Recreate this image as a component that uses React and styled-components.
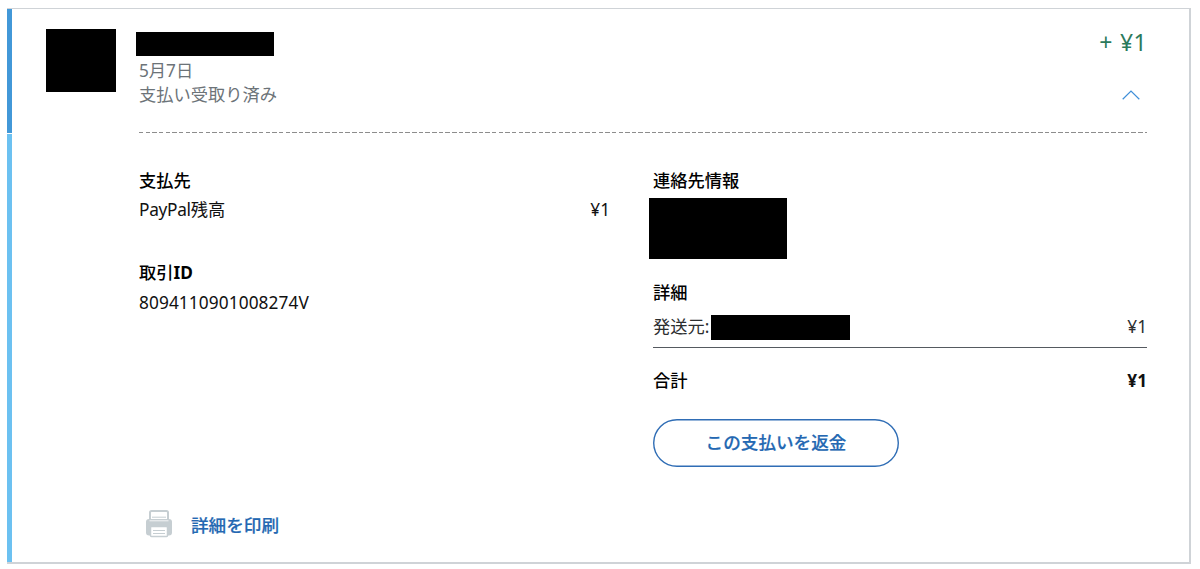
import styled, { createGlobalStyle } from "styled-components";

const GlobalStyle = createGlobalStyle`
    * {
        box-sizing: border-box;
    }

    body {
        margin: 0;
        background: #fff;
        color: #111;
        font-family: "Noto Sans", "Noto Sans CJK JP", sans-serif;
        font-size: 17.25px;
    }
`;

const App = () => {
    return (
        <>
            <GlobalStyle />
            <Card lang="ja">
                <Summary>
                    <Avatar />
                    <SummaryContent>
                        <SummaryText>
                            <Redacted $width={138} $height={24} />
                            <Muted>5月7日</Muted>
                            <Muted>支払い受取り済み</Muted>
                        </SummaryText>
                        <SummaryAside>
                            <Amount>+ ¥1</Amount>
                            <ChevronUp viewBox="0 0 18 10">
                                <path d="M0.7 9.2 L9 1 L17.3 9.2" />
                            </ChevronUp>
                        </SummaryAside>
                    </SummaryContent>
                </Summary>
                <Details>
                    <Columns>
                        <Column>
                            <Heading>支払先</Heading>
                            <FundingRow>
                                <span><Brand>PayPal</Brand>残高</span>
                                <Price>¥1</Price>
                            </FundingRow>
                            <Heading>取引<b>ID</b></Heading>
                            <TransactionId>8094110901008274V</TransactionId>
                        </Column>
                        <Column>
                            <Heading>連絡先情報</Heading>
                            <ContactBlock $width={138} $height={61} />
                            <Heading>詳細</Heading>
                            <SenderRow>
                                <Sender>
                                    発送元:
                                    <Redacted $width={139} $height={25} />
                                </Sender>
                                <Price>¥1</Price>
                            </SenderRow>
                            <TotalRow>
                                <Heading>合計</Heading>
                                <Price $bold>¥1</Price>
                            </TotalRow>
                            <RefundButton>この支払いを返金</RefundButton>
                        </Column>
                    </Columns>
                    <PrintLink href="#">
                        <PrinterIcon viewBox="0 0 26 28">
                            <path d="M4 9V2.5Q4 1 5.5 1H20.5Q22 1 22 2.5V9" />
                            <path className="line" d="M6 7.2H20" />
                            <rect x="0" y="9" width="26" height="16.5" rx="3" />
                            <path className="gap" d="M3.5 10.8H22.5" />
                            <rect className="paper" x="4.5" y="16.5" width="17" height="10" rx="1" />
                            <path className="line" d="M7 20.5H19M7 23.5H19" />
                        </PrinterIcon>
                        詳細を印刷
                    </PrintLink>
                </Details>
            </Card>
        </>
    );
};

const Card = styled.div`
    width: 1184px;
    height: 556px;
    margin: 8px 0 0 7px;
    border: solid #cfd3d7;
    border-width: 1px 2px 2px 0;
    display: flex;
    flex-direction: column;
    gap: 1px;
`;

const Summary = styled.div`
    display: flex;
    height: 124px;
    padding: 20px 42px 0 34px;
    border-left: 5px solid #4298d8;
`;

const Avatar = styled.div`
    width: 70px;
    height: 63px;
    background: #000;
`;

const SummaryContent = styled.div`
    flex: 1;
    display: flex;
    justify-content: space-between;
    margin-left: 23px;
    background: repeating-linear-gradient(90deg, #8d8d8d 0 4.5px, transparent 4.5px 6.66px) bottom / 100% 1px no-repeat;
`;

const SummaryText = styled.div`
    padding-top: 3px;
`;

const Redacted = styled.div`
    width: ${({ $width }) => $width}px;
    height: ${({ $height }) => $height}px;
    margin-left: -3.5px;
    background: #000;
`;

const Muted = styled.div`
    height: 24px;
    line-height: 29px;
    color: #6c7378;
`;

const SummaryAside = styled.div`
    display: flex;
    flex-direction: column;
    align-items: flex-end;
`;

const Amount = styled.div`
    height: 28px;
    line-height: 27px;
    font-size: 23px;
    word-spacing: 1px;
    letter-spacing: 0.3px;
    color: #2b7a5c;
`;

const ChevronUp = styled.svg`
    width: 18px;
    height: 10px;
    margin: 33px 7px 0 0;
    fill: none;
    stroke: #3f8fd8;
    stroke-width: 1.2;
`;

const Details = styled.div`
    flex: 1;
    padding: 33px 42px 0 127px;
    border-left: 5px solid #6cc1f1;
`;

const Columns = styled.div`
    display: grid;
    grid-template-columns: 471px 494px;
    column-gap: 43px;
    height: 342px;
`;

const Column = styled.div`
    display: flex;
    flex-direction: column;
`;

const Heading = styled.div`
    height: 28px;
    line-height: 28px;
    font-weight: 500;
    color: #000;
`;

const FundingRow = styled.div`
    display: flex;
    justify-content: space-between;
    height: 28px;
    margin-bottom: 36px;
    line-height: 29px;
`;

const Brand = styled.span`
    letter-spacing: -0.3px;
`;

const Price = styled.span`
    font-size: 17.25px;
    font-weight: ${({ $bold }) => ($bold ? 700 : 400)};
`;

const TransactionId = styled.div`
    margin-top: 2px;
    line-height: 28px;
    letter-spacing: 0.1px;
`;

const ContactBlock = styled(Redacted)`
    margin: 3px 0 20px -4px;
`;

const SenderRow = styled.div`
    display: flex;
    justify-content: space-between;
    height: 41px;
    line-height: 39px;
    border-bottom: 1px solid #555a60;
    color: #2c2e2f;
`;

const Sender = styled.div`
    display: flex;
    height: 38px;

    ${Redacted} {
        margin: 8px 0 0 2px;
    }
`;

const TotalRow = styled.div`
    display: flex;
    justify-content: space-between;
    margin-top: 19px;
    line-height: 28px;
`;

const RefundButton = styled.button`
    width: 246px;
    height: 48px;
    margin-top: 24px;
    padding: 0 0 3px;
    border: 0;
    border-radius: 24px;
    box-shadow: inset 0 0 0 1.4px #2f6db5;
    background: #fff;
    color: #2468b2;
    font-family: inherit;
    font-size: 17.6px;
    font-weight: 500;
    -webkit-text-stroke: 0.2px #2468b2;
`;

const PrintLink = styled.a`
    display: flex;
    align-items: center;
    gap: 19px;
    width: fit-content;
    height: 30px;
    margin-left: 7px;
    color: #2468b2;
    font-size: 17.6px;
    font-weight: 500;
    text-decoration: none;
    -webkit-text-stroke: 0.2px #2468b2;
`;

const PrinterIcon = styled.svg`
    width: 26px;
    height: 28px;
    fill: #c6ced2;

    path {
        fill: none;
        stroke: #c6ced2;
        stroke-width: 2;
    }

    .gap {
        stroke: #fff;
        stroke-width: 0.8;
    }

    .line {
        stroke-width: 1;
    }

    .paper {
        fill: #fff;
        stroke: #c6ced2;
        stroke-width: 1.5;
    }
`;

export default App;
